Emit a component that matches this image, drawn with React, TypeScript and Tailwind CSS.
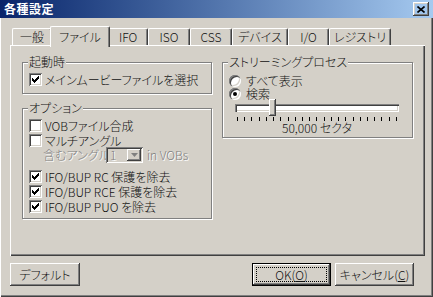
import React from 'react';

const raised =
  'shadow-[inset_-1px_-1px_#404040,inset_1px_1px_#ffffff,inset_-2px_-2px_#808080,inset_2px_2px_#d4d0c8]';
const sunken =
  'shadow-[inset_1px_1px_#808080,inset_-1px_-1px_#ffffff,inset_2px_2px_#404040,inset_-2px_-2px_#d4d0c8]';
const grayed = 'text-[#808080] [text-shadow:1px_1px_0_#ffffff]';

const Check = ({ checked }: { checked?: boolean }) => (
  <span className={`w-[13px] h-[13px] shrink-0 bg-white flex items-center justify-center ${sunken}`}>
    {checked && (
      <svg width="7" height="7" viewBox="0 0 7 7">
        <path d="M0 2h1v1h1v1h1v-1h1v-1h1v-1h1v-1h1v3h-1v1h-1v1h-1v1h-1v1h-1v-1h-1v-1h-1z" fill="#000" />
      </svg>
    )}
  </span>
);

const Radio = ({ on }: { on?: boolean }) => (
  <span className="w-[12px] h-[12px] shrink-0 rounded-full bg-white flex items-center justify-center shadow-[inset_1px_1px_#808080,inset_2px_2px_#404040,inset_-1px_-1px_#ffffff,inset_-2px_-2px_#d4d0c8]">
    {on && <span className="w-[4px] h-[4px] rounded-full bg-black" />}
  </span>
);

const CheckRow = ({ label, checked }: { label: string; checked?: boolean }) => (
  <div className="h-[15px] flex items-center gap-[3px] whitespace-nowrap">
    <Check checked={checked} />
    <span>{label}</span>
  </div>
);

const Group = ({ title, className, children }: { title: string; className?: string; children: React.ReactNode }) => (
  <fieldset className={`border border-[#808080] shadow-[inset_1px_1px_#ffffff,1px_1px_#ffffff] ${className ?? ''}`}>
    <legend className="ml-[5px] px-[1px] bg-[#d4d0c8] leading-[14px]">{title}</legend>
    {children}
  </fieldset>
);

const Tab = ({ label, w, active }: { label: string; w: string; active?: boolean }) =>
  active ? (
    <div
      className={`${w} -mx-[2px] -mb-[2px] h-[21px] relative z-10 bg-[#d4d0c8] border-t border-l border-white border-r border-r-[#404040] rounded-t-[2px] shadow-[inset_-1px_0_#808080] flex items-center justify-center pt-[1px] pb-[1px]`}
    >
      {label}
    </div>
  ) : (
    <div
      className={`${w} h-[17px] border-t border-l border-white border-r border-r-[#404040] rounded-t-[2px] shadow-[inset_-1px_0_#808080] flex items-center justify-center`}
    >
      {label}
    </div>
  );

const Button = ({ children, w, primary }: { children: React.ReactNode; w: string; primary?: boolean }) =>
  primary ? (
    <div className={`${w} h-[23px] border border-black`}>
      <div className={`w-full h-full p-[3px] ${raised}`}>
        <div className="w-full h-full border border-dotted border-black flex items-center justify-center">
          {children}
        </div>
      </div>
    </div>
  ) : (
    <div className={`${w} h-[23px] flex items-center justify-center ${raised}`}>{children}</div>
  );

export default function App() {
  const ticks = Array.from({ length: 23 });
  return (
    <div className="w-[433px] h-[297px] overflow-hidden bg-[#d4d0c8] text-[#111] text-[12px] leading-[14px] font-light font-['Noto_Sans_CJK_JP',sans-serif] [font-feature-settings:'palt'] flex flex-col shadow-[inset_1px_0_#ffffff,inset_-1px_-1px_#404040,inset_-2px_-2px_#808080]">
      {/* title bar */}
      <div className="h-[18px] shrink-0 flex items-center bg-linear-to-r from-[#0a246a] to-[#a6caf0]">
        <span className="ml-[4px] text-white font-bold tracking-[0.5px]">各種設定</span>
        <div className={`ml-auto mr-[4px] w-[16px] h-[14px] flex items-center justify-center ${raised}`}>
          <svg width="8" height="7" viewBox="0 0 8 7">
            <path d="M0.5 0.5L7.5 6.5M7.5 0.5L0.5 6.5" stroke="#000" strokeWidth="1.6" />
          </svg>
        </div>
      </div>

      <div className="pl-[10px] pt-[8px]">
        {/* tabs */}
        <div className="h-[19px] pl-[2px] flex items-end">
          <Tab label="一般" w="w-[40px]" />
          <Tab label="ファイル" w="w-[60px]" active />
          <Tab label="IFO" w="w-[40px]" />
          <Tab label="ISO" w="w-[42px]" />
          <Tab label="CSS" w="w-[42px]" />
          <Tab label="デバイス" w="w-[56px]" />
          <Tab label="I/O" w="w-[41px]" />
          <Tab label="レジストリ" w="w-[62px]" />
        </div>

        {/* panel */}
        <div className="w-[415px] h-[211px] pl-[12px] pt-[10px] flex gap-[10px] shadow-[inset_1px_1px_#ffffff,inset_-1px_-1px_#404040,inset_-2px_-2px_#808080]">
          <div className="w-[190px] flex flex-col">
            <Group title="起動時">
              <div className="pl-[6px] pt-[3px] pb-[6px]">
                <CheckRow label="メインムービーファイルを選択" checked />
              </div>
            </Group>
            <Group title="オプション" className="mt-[7px]">
              <div className="pl-[6px] pt-[3px] pb-[4px]">
                <CheckRow label="VOBファイル合成" />
                <CheckRow label="マルチアングル" />
                <div className="h-[16px] -mt-[1px] pl-[14px] flex items-center whitespace-nowrap">
                  <span className={`w-[63px] overflow-hidden ${grayed}`}>含むアングル</span>
                  <div className={`w-[37px] h-[16px] flex items-center bg-[#d4d0c8] ${sunken}`}>
                    <span className={`flex-1 pl-[4px] ${grayed}`}>1</span>
                    <div className={`w-[14px] h-[12px] mr-[2px] flex items-center justify-center ${raised}`}>
                      <svg width="7" height="4" viewBox="0 0 7 4">
                        <path d="M0 0h7L3.5 4z" fill="#808080" />
                      </svg>
                    </div>
                  </div>
                  <span className={`ml-[4px] ${grayed}`}>in VOBs</span>
                </div>
                <div className="mt-[6px]">
                  <CheckRow label="IFO/BUP RC 保護を除去" checked />
                  <CheckRow label="IFO/BUP RCE 保護を除去" checked />
                  <CheckRow label="IFO/BUP PUO を除去" checked />
                </div>
              </div>
            </Group>
          </div>

          <div className="w-[191px] flex flex-col">
            <Group title="ストリーミングプロセス">
              <div className="pt-[5px] pb-[2px]">
                <div className="h-[13px] leading-[12px] pl-[6px] flex items-center gap-[5px]">
                  <Radio />
                  <span>すべて表示</span>
                </div>
                <div className="h-[13px] leading-[12px] pl-[6px] flex items-center gap-[5px]">
                  <Radio on />
                  <span>検索</span>
                </div>
                <div className="ml-[12px] mt-[4px] w-[164px]">
                  <div className="relative h-[8px] bg-white shadow-[inset_1px_1px_#808080,inset_2px_2px_#404040,inset_-1px_-1px_#ffffff,inset_-2px_-2px_#d4d0c8]">
                    <div className={`absolute left-[34px] -top-[5px] w-[7px] h-[17px] bg-[#d4d0c8] ${raised}`} />
                  </div>
                  <div className="mt-[5px] mx-[2px] h-[4px] flex justify-between">
                    {ticks.map((_, i) => (
                      <span key={i} className="w-px h-full bg-black" />
                    ))}
                  </div>
                  <div className="text-center">50,000 セクタ</div>
                </div>
              </div>
            </Group>
          </div>
        </div>
      </div>

      {/* buttons */}
      <div className="mt-[7px] pl-[10px] pr-[19px] flex">
        <Button w="w-[70px]">デフォルト</Button>
        <div className="ml-auto flex gap-[4px]">
          <Button w="w-[79px]" primary>
            <span>
              OK(<span className="underline">O</span>)
            </span>
          </Button>
          <Button w="w-[79px]">
            <span>
              キャンセル(<span className="underline">C</span>)
            </span>
          </Button>
        </div>
      </div>
    </div>
  );
}
